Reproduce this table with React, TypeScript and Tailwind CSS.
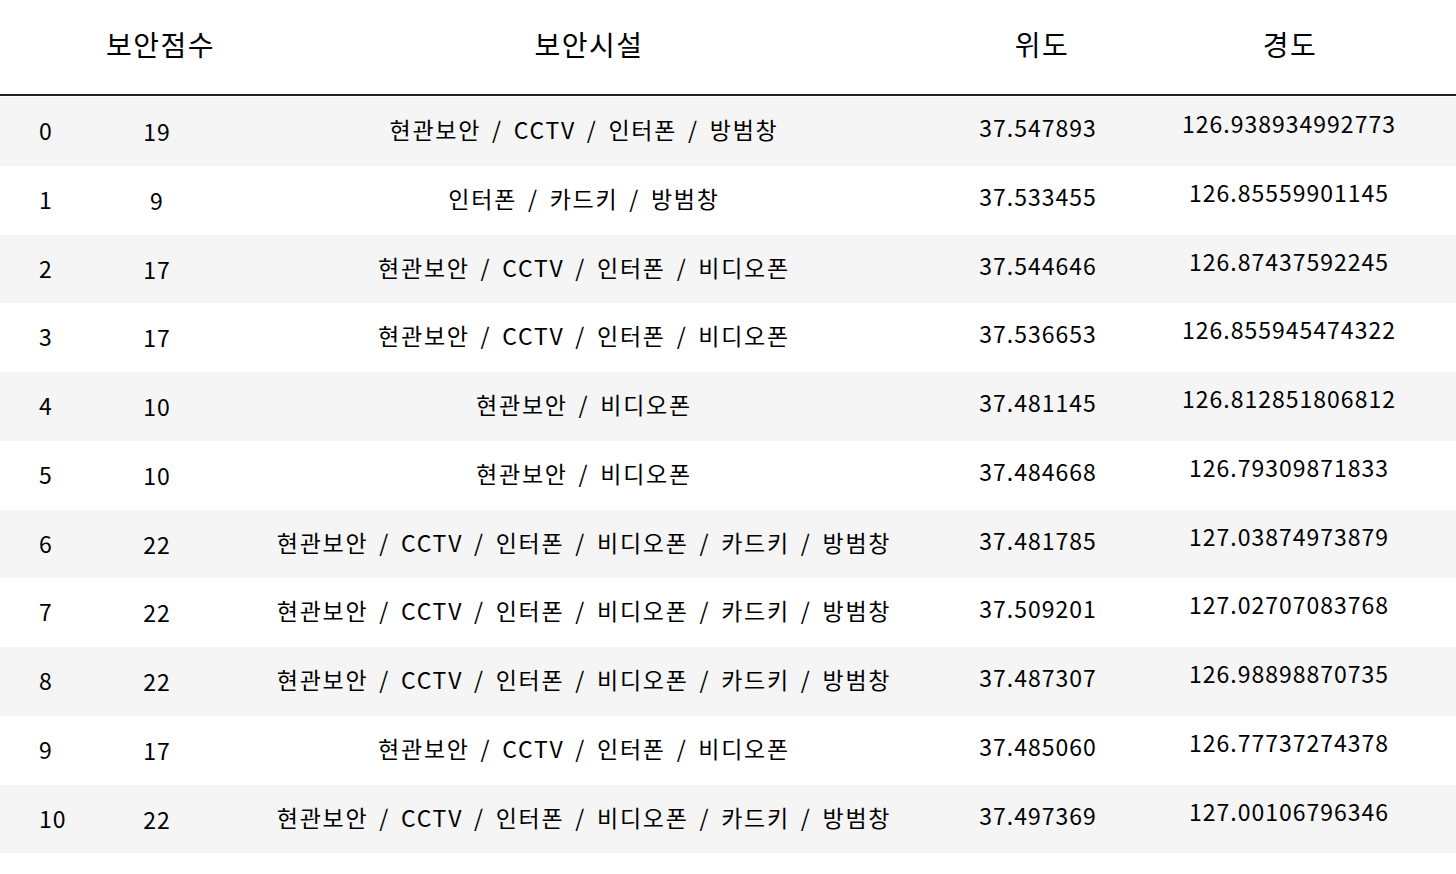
import React from "react";

const rows: [number, number, string, string, string][] = [
  [0, 19, "현관보안 / CCTV / 인터폰 / 방범창", "37.547893", "126.938934992773"],
  [1, 9, "인터폰 / 카드키 / 방범창", "37.533455", "126.85559901145"],
  [2, 17, "현관보안 / CCTV / 인터폰 / 비디오폰", "37.544646", "126.87437592245"],
  [3, 17, "현관보안 / CCTV / 인터폰 / 비디오폰", "37.536653", "126.855945474322"],
  [4, 10, "현관보안 / 비디오폰", "37.481145", "126.812851806812"],
  [5, 10, "현관보안 / 비디오폰", "37.484668", "126.79309871833"],
  [6, 22, "현관보안 / CCTV / 인터폰 / 비디오폰 / 카드키 / 방범창", "37.481785", "127.03874973879"],
  [7, 22, "현관보안 / CCTV / 인터폰 / 비디오폰 / 카드키 / 방범창", "37.509201", "127.02707083768"],
  [8, 22, "현관보안 / CCTV / 인터폰 / 비디오폰 / 카드키 / 방범창", "37.487307", "126.98898870735"],
  [9, 17, "현관보안 / CCTV / 인터폰 / 비디오폰", "37.485060", "126.77737274378"],
  [10, 22, "현관보안 / CCTV / 인터폰 / 비디오폰 / 카드키 / 방범창", "37.497369", "127.00106796346"],
];

const grid = "grid grid-cols-[100px_114px_740px_168px_334px]";

export default function App() {
  return (
    <div
      className="w-[1456px] h-[874px] bg-white text-black overflow-hidden"
      style={{ fontFamily: '"Noto Sans CJK KR", "Noto Sans", sans-serif' }}
    >
      <div className={`${grid} h-[94px] items-center text-[28px] tracking-[1.5px] whitespace-nowrap`}>
        <div />
        <div className="text-center pl-[6px] -translate-y-[3px]">보안점수</div>
        <div className="text-center pl-[10px] -translate-y-[3px]">보안시설</div>
        <div className="text-center pl-[8px] -translate-y-[3px]">위도</div>
        <div className="text-center pl-[2px] -translate-y-[3px]">경도</div>
      </div>
      <div className="h-[2px] bg-[#222]" />
      <div className="h-px" />
      {rows.map((r, i) => (
        <div
          key={r[0]}
          className={`${grid} h-[68.75px] items-center text-[23px] tracking-[1px] ${
            i % 2 === 0 ? "bg-[#f5f5f5]" : "bg-white"
          }`}
        >
          <div className="pl-[39px] -translate-y-px">{r[0]}</div>
          <div className="text-center">{r[1]}</div>
          <div className="text-center whitespace-pre -translate-y-[2px] tracking-[1.75px] [word-spacing:4px]">
            {r[2]}
          </div>
          <div className="text-center -translate-y-[4px]">{r[3]}</div>
          <div className="text-center -translate-y-[8px]">{r[4]}</div>
        </div>
      ))}
    </div>
  );
}
